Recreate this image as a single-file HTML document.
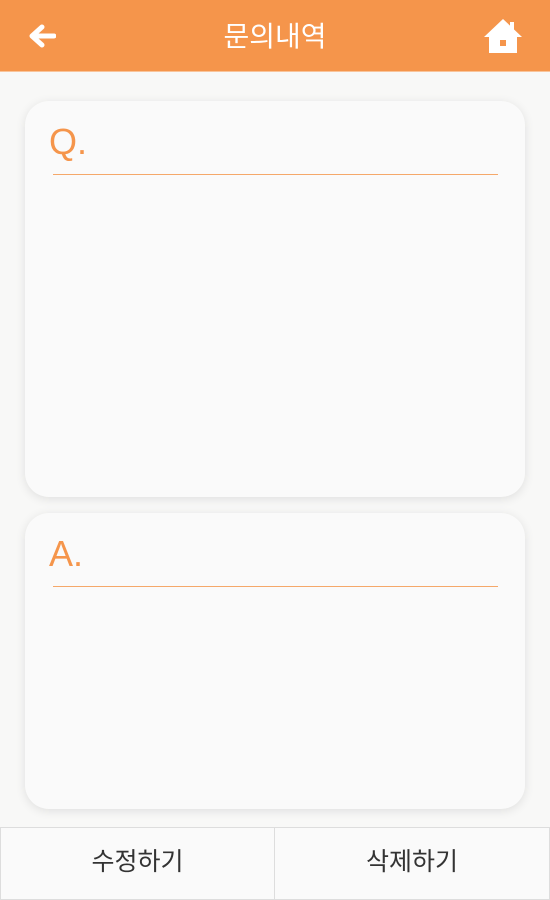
<!DOCTYPE html>
<html><head><meta charset="utf-8"><style>
body{margin:0;width:550px;height:900px;background:#f8f8f7;position:relative;overflow:hidden;font-family:"Liberation Sans","Noto Sans CJK KR",sans-serif}
.hdr{position:absolute;left:0;top:0;width:550px;height:71px;background:#f5954b;border-bottom:1px solid #f9c49a}
.title{position:absolute;left:0;width:550px;top:15px;text-align:center;color:#fff;font-size:28px}
.card{position:absolute;left:25px;width:500px;background:#fafafa;border-radius:24px;box-shadow:0 2px 10px rgba(0,0,0,.1)}
.lbl{position:absolute;left:24px;top:20px;color:#f5954b;font-size:36px}
.line{position:absolute;left:28px;right:27px;height:1px;background:#f5a86a}
.btn{position:absolute;top:827px;height:73px;background:#fafafa;border:1px solid #ddd;box-sizing:border-box;text-align:center;line-height:68px;font-size:25px;color:#333}
</style></head><body>
<div class="hdr">
<svg style="position:absolute;left:28px;top:24px" width="28" height="24" viewBox="0 0 28 24"><path d="M14 3 L4 12 L14 21 M4 12 H26" stroke="#fff" stroke-width="5" fill="none" stroke-linecap="round" stroke-linejoin="round"/></svg>
<div class="title">문의내역</div>
<svg style="position:absolute;left:484px;top:19px" width="38" height="34" viewBox="0 0 38 34"><path d="M19 0 L38 18 H33 V34 H5 V18 H0 Z" fill="#fff"/><rect x="26" y="3" width="4" height="10" fill="#fff"/><rect x="16" y="21" width="6" height="6" fill="#f5954b"/></svg>
</div>
<div class="card" style="top:101px;height:396px"><div class="lbl">Q.</div><div class="line" style="top:73px"></div></div>
<div class="card" style="top:513px;height:296px"><div class="lbl">A.</div><div class="line" style="top:73px"></div></div>
<div class="btn" style="left:0;width:275px">수정하기</div>
<div class="btn" style="left:274px;width:276px">삭제하기</div>
</body></html>
